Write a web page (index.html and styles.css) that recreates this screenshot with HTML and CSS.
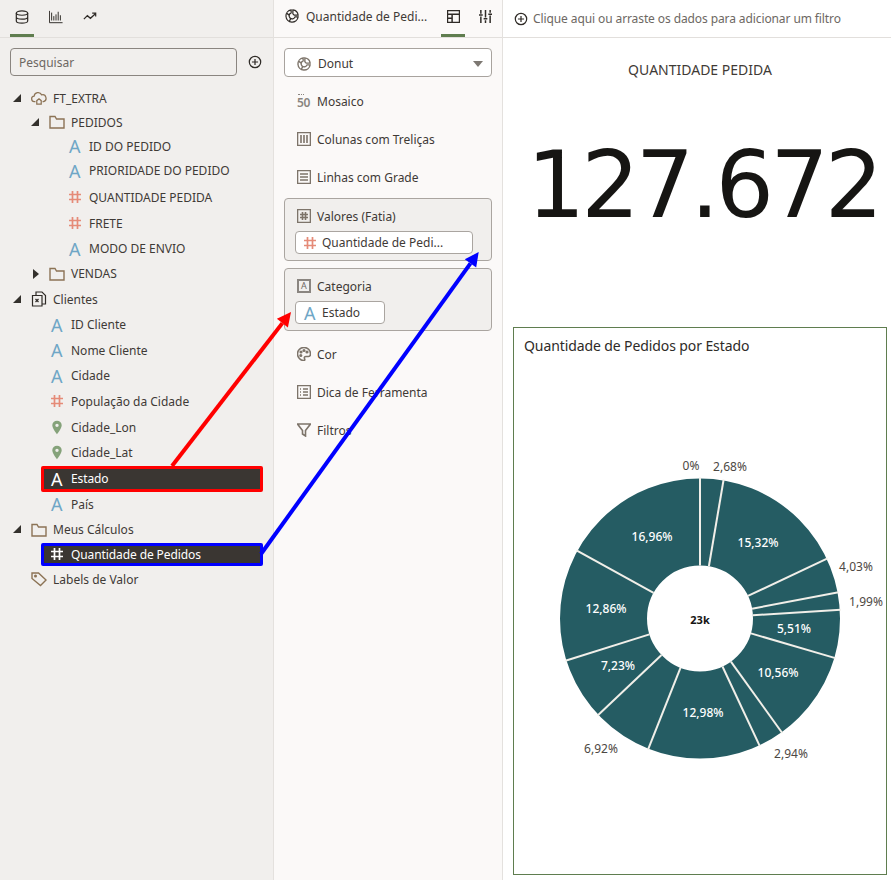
FILE: index.html
```html
<!DOCTYPE html>
<html>
<head>
    <title>Quantidade de Pedidos</title>
    <link rel="stylesheet" href="styles.css">
</head>
<body>
    <svg class="sprite" xmlns="http://www.w3.org/2000/svg">
        <symbol id="i-db" viewBox="0 0 16 16"><ellipse cx="8" cy="3.5" rx="6.5" ry="2.5"/><path d="M1.5 3.5v9c0 1.4 2.9 2.5 6.5 2.5s6.500-1.100 6.500-2.500v-9M1.500 8c0 1.400 2.900 2.500 6.500 2.500s6.500-1.100 6.500-2.500"/></symbol>
        <symbol id="i-bars" viewBox="0 0 16 16"><path d="M.5 1v13.500h15M3 12V3M5.500 12V7M8 12V5M10.500 12V2M13 12V6"/></symbol>
        <symbol id="i-trend" viewBox="0 0 16 16"><path d="M1 10.500l4-4 3.500 3 6-5.500M10.500 3.500h4v4"/></symbol>
        <symbol id="i-plus" viewBox="0 0 16 16"><circle cx="8" cy="8" r="6.500"/><path d="M8 4.500v7M4.500 8h7"/></symbol>
        <symbol id="i-cloud" viewBox="0 0 18 16"><path d="M5 12H4a3 3 0 0 1-.500-6 4.500 4.500 0 0 1 8.500-1.500 3.800 3.800 0 0 1 2 7.500h-1"/><path d="M6.500 15v-4l2.500-2 2.500 2v4z"/></symbol>
        <symbol id="i-folder" viewBox="0 0 16 16"><path d="M1 14V2.500h5l1.500 2.500h7.500v9z"/></symbol>
        <symbol id="i-docs" viewBox="0 0 16 16"><path d="M5 4V1h6l3.500 3.500V13H11"/><path d="M1.500 4.500H11V15H1.500z"/><path d="M4.500 8l3 3M7.500 8l-3 3"/></symbol>
        <symbol id="i-pin" viewBox="0 0 14 16"><path fill-rule="evenodd" d="M7 0a5.500 5.500 0 0 0-5.500 5.500C1.500 9.500 7 16 7 16s5.500-6.500 5.500-10.500A5.500 5.500 0 0 0 7 0zm0 3.500a2 2 0 1 1 0 4 2 2 0 0 1 0-4z"/></symbol>
        <symbol id="i-tag" viewBox="0 0 16 16"><path d="M1 2h6.500l7.500 7-5.500 5.500L1 7.500z"/><circle cx="4.500" cy="5" r=".8"/></symbol>
        <symbol id="i-hash" viewBox="0 0 12 12"><path d="M3.500 0v12M8.500 0v12M0 3.500h12M0 8.500h12"/></symbol>
        <symbol id="i-donut" viewBox="0 0 16 16"><path d="M7 1a7 7 0 1 0 8 8h-3.500A3.500 3.500 0 1 1 7 4.500z"/><path d="M9 1v4.500l1.500 1.500H15A7 7 0 0 0 9 1z"/><path d="M2 5l3 2M5 14l1.500-3"/></symbol>
        <symbol id="i-layout" viewBox="0 0 14 14"><path d="M.5.500h13v13H.500zM.5 4.500h13M5.500 4.500v9M.5 9h5"/></symbol>
        <symbol id="i-sliders" viewBox="0 0 14 14"><path d="M2 0v4M2 7v7M7 0v8M7 11v3M12 0v3M12 6v8M0 5.500h4M5 9.500h4M10 4.500h4"/></symbol>
        <symbol id="i-cols" viewBox="0 0 14 14"><path d="M.5.500h13v13H.500zM4 3v8M7 3v8M10 3v8"/></symbol>
        <symbol id="i-rows" viewBox="0 0 14 14"><path d="M.5.500h13v13H.500zM3 4h8M3 7h8M3 10h8"/></symbol>
        <symbol id="i-grid" viewBox="0 0 14 14"><path d="M.5.500h13v13H.500zM5.500 3v8M8.500 3v8M3 5.500h8M3 8.500h8"/></symbol>
        <symbol id="i-palette" viewBox="0 0 14 14"><path d="M7 .5C3 .5.500 3.500.500 7S3.500 13.500 6.500 13.500c1.500 0 1.500-1 1-2s0-2 1.500-2h2.500c1.500 0 2-1 2-2.500C13.500 3 10.500.500 7 .5z"/><circle cx="4" cy="5" r=".8"/><circle cx="7" cy="3.500" r=".8"/><circle cx="10" cy="5" r=".8"/><circle cx="3.800" cy="8.500" r=".8"/></symbol>
        <symbol id="i-list" viewBox="0 0 14 14"><path d="M.5.500h13v13H.500zM3 4h1M6 4h5M3 7h1M6 7h5M3 10h1M6 10h5"/></symbol>
        <symbol id="i-funnel" viewBox="0 0 14 14"><path d="M.5 1h13L8.500 7.500V13l-3-2V7.500z"/></symbol>
    </svg>

    <div class="page">
        <aside class="data-panel">
            <div class="tabs">
                <span class="tab active"><svg class="icon dark"><use href="#i-db"/></svg></span>
                <span class="tab"><svg class="icon dark thin"><use href="#i-bars"/></svg></span>
                <span class="tab"><svg class="icon dark"><use href="#i-trend"/></svg></span>
            </div>
            <div class="search-row">
                <div class="search">Pesquisar</div>
                <svg class="icon dark add"><use href="#i-plus"/></svg>
            </div>
            <div class="tree">
                <div class="row short lvl0"><span class="toggle open"></span><svg class="icon brown cloud"><use href="#i-cloud"/></svg>FT_EXTRA</div>
                <div class="row short lvl1"><span class="toggle open"></span><svg class="icon brown"><use href="#i-folder"/></svg>PEDIDOS</div>
                <div class="row short lvl2"><span class="toggle"></span><span class="attr">A</span>ID DO PEDIDO</div>
                <div class="row lvl2"><span class="toggle"></span><span class="attr">A</span>PRIORIDADE DO PEDIDO</div>
                <div class="row tall lvl2"><span class="toggle"></span><svg class="icon num"><use href="#i-hash"/></svg>QUANTIDADE PEDIDA</div>
                <div class="row lvl2"><span class="toggle"></span><svg class="icon num"><use href="#i-hash"/></svg>FRETE</div>
                <div class="row lvl2"><span class="toggle"></span><span class="attr">A</span>MODO DE ENVIO</div>
                <div class="row short lvl1"><span class="toggle closed"></span><svg class="icon brown"><use href="#i-folder"/></svg>VENDAS</div>
                <div class="row tall lvl0"><span class="toggle open"></span><svg class="icon dark docs"><use href="#i-docs"/></svg>Clientes</div>
                <div class="row short leaf"><span class="attr">A</span>ID Cliente</div>
                <div class="row tall leaf"><span class="attr">A</span>Nome Cliente</div>
                <div class="row short leaf"><span class="attr">A</span>Cidade</div>
                <div class="row tall leaf"><svg class="icon num"><use href="#i-hash"/></svg>População da Cidade</div>
                <div class="row leaf"><svg class="icon pin"><use href="#i-pin"/></svg>Cidade_Lon</div>
                <div class="row leaf"><svg class="icon pin"><use href="#i-pin"/></svg>Cidade_Lat</div>
                <div class="row selected red"><span class="attr">A</span>Estado</div>
                <div class="row leaf"><span class="attr">A</span>País</div>
                <div class="row lvl0"><span class="toggle open"></span><svg class="icon brown"><use href="#i-folder"/></svg>Meus Cálculos</div>
                <div class="row selected blue"><svg class="icon num"><use href="#i-hash"/></svg>Quantidade de Pedidos</div>
                <div class="row tall lvl0"><span class="toggle"></span><svg class="icon brown"><use href="#i-tag"/></svg>Labels de Valor</div>
            </div>
        </aside>

        <section class="grammar-panel">
            <div class="grammar-head">
                <svg class="icon dark chart-type"><use href="#i-donut"/></svg>
                <span class="grammar-title">Quantidade de Pedi...</span>
                <span class="tab small active"><svg class="icon dark"><use href="#i-layout"/></svg></span>
                <span class="tab small"><svg class="icon dark"><use href="#i-sliders"/></svg></span>
            </div>
            <div class="grammar-body">
                <div class="dropdown">
                    <svg class="icon grey"><use href="#i-donut"/></svg>
                    <span class="dropdown-label">Donut</span>
                    <span class="caret"></span>
                </div>
                <div class="items">
                    <div class="item"><span class="mosaic">50</span>Mosaico</div>
                    <div class="item"><svg class="icon grey"><use href="#i-cols"/></svg>Colunas com Treliças</div>
                    <div class="item"><svg class="icon grey"><use href="#i-rows"/></svg>Linhas com Grade</div>
                </div>
                <div class="drop-box">
                    <div class="drop-head"><svg class="icon grey"><use href="#i-grid"/></svg>Valores (Fatia)</div>
                    <div class="pill wide"><svg class="icon num"><use href="#i-hash"/></svg>Quantidade de Pedi...</div>
                </div>
                <div class="drop-box">
                    <div class="drop-head"><span class="boxed-a">A</span>Categoria</div>
                    <div class="pill"><span class="attr">A</span>Estado</div>
                </div>
                <div class="items after">
                    <div class="item"><svg class="icon grey"><use href="#i-palette"/></svg>Cor</div>
                    <div class="item"><svg class="icon grey"><use href="#i-list"/></svg>Dica de Ferramenta</div>
                    <div class="item"><svg class="icon grey"><use href="#i-funnel"/></svg>Filtros</div>
                </div>
            </div>
        </section>

        <main class="canvas">
            <div class="filter-bar">
                <svg class="icon dark"><use href="#i-plus"/></svg>
                Clique aqui ou arraste os dados para adicionar um filtro
            </div>
            <div class="kpi">
                <div class="kpi-title">QUANTIDADE PEDIDA</div>
                <div class="kpi-value">127.672</div>
            </div>
            <div class="chart-card">
                <div class="chart-title">Quantidade de Pedidos por Estado</div>
                <svg class="donut" viewBox="514 360 372 514" xmlns="http://www.w3.org/2000/svg">
                    <circle class="ring" cx="700" cy="618.500" r="96.500"/>
                    <g class="cuts" transform="translate(700 618.500)">
                        <line y1="-53" y2="-141"/>
                        <line y1="-53" y2="-141" transform="rotate(9.648)"/>
                        <line y1="-53" y2="-141" transform="rotate(64.8)"/>
                        <line y1="-53" y2="-141" transform="rotate(79.308)"/>
                        <line y1="-53" y2="-141" transform="rotate(86.472)"/>
                        <line y1="-53" y2="-141" transform="rotate(106.308)"/>
                        <line y1="-53" y2="-141" transform="rotate(144.324)"/>
                        <line y1="-53" y2="-141" transform="rotate(154.908)"/>
                        <line y1="-53" y2="-141" transform="rotate(201.636)"/>
                        <line y1="-53" y2="-141" transform="rotate(226.548)"/>
                        <line y1="-53" y2="-141" transform="rotate(252.576)"/>
                        <line y1="-53" y2="-141" transform="rotate(298.872)"/>
                    </g>
                    <g class="out">
                        <text x="691" y="470">0%</text>
                        <text x="730" y="471">2,68%</text>
                        <text x="856" y="571">4,03%</text>
                        <text x="866" y="606">1,99%</text>
                        <text x="791" y="758">2,94%</text>
                        <text x="601" y="753">6,92%</text>
                    </g>
                    <g class="in">
                        <text x="758" y="547">15,32%</text>
                        <text x="794" y="633">5,51%</text>
                        <text x="778" y="677">10,56%</text>
                        <text x="703" y="717">12,98%</text>
                        <text x="618" y="670">7,23%</text>
                        <text x="606" y="613">12,86%</text>
                        <text x="652" y="541">16,96%</text>
                    </g>
                    <text class="total" x="700" y="624">23k</text>
                </svg>
            </div>
        </main>
    </div>

    <svg class="arrows" viewBox="0 0 891 880" xmlns="http://www.w3.org/2000/svg">
        <line class="arrow-red" x1="172" y1="466" x2="282.400" y2="323.100"/>
        <polygon fill="#ff0000" points="291,312 287.900,327.400 276.900,318.800"/>
        <line class="arrow-blue" x1="261" y1="554" x2="470.500" y2="263.400"/>
        <polygon fill="#0000ff" points="478.700,252 476.200,267.500 464.800,259.300"/>
    </svg>
</body>
</html>
```

FILE: styles.css
```css
* {
    box-sizing: border-box;
}

body {
    margin: 0;
    height: 880px;
    overflow: hidden;
    position: relative;
    font-family: "Noto Sans", sans-serif;
    font-size: 12px;
    color: #3f3a36;
    background-color: #fff;
}

.sprite {
    display: none;
}

.page {
    display: flex;
    height: 880px;
}

.icon {
    width: 14px;
    height: 14px;
    flex: none;
    fill: none;
    stroke-width: 1.4;
    overflow: visible;
}

.dark {
    stroke: #2f2b27;
}

.thin {
    stroke-width: 1.1;
}

.brown {
    stroke: #8c7355;
    width: 16px;
    height: 16px;
}

.docs {
    width: 16px;
    height: 16px;
    stroke-width: 1.2;
}

.grey {
    stroke: #7d746a;
    stroke-width: 1.6;
}

.pin {
    width: 12px;
    height: 15px;
    fill: #85a27a;
    stroke: none;
}

/* left panel */
.data-panel {
    width: 274px;
    flex: none;
    background-color: #f1efed;
    border-right: 1px solid #e4e1de;
}

.tabs {
    display: flex;
    height: 38px;
    padding-left: 10px;
    border-bottom: 1px solid #e2dfdc;
    gap: 10px;
}

.tab {
    width: 24px;
    height: 37px;
    flex: none;
    display: flex;
    justify-content: center;
    padding-top: 10px;
    border-bottom: 3px solid transparent;
}

.tab.active {
    border-bottom-color: #5f7d4f;
}

.search-row {
    display: flex;
    align-items: center;
    padding: 10px 0 0 10px;
    gap: 11px;
}

.search {
    width: 227px;
    height: 28px;
    border: 1px solid #8a8580;
    border-radius: 4px;
    padding: 1px 8px 0;
    line-height: 26px;
    color: #6d6863;
}

.tree {
    margin-top: 10px;
}

.row {
    display: flex;
    align-items: center;
    height: 25.5px;
}

.row.short {
    height: 24px;
}

.row.tall {
    height: 27px;
}

.lvl0 {
    padding-left: 13px;
}

.lvl1 {
    padding-left: 31px;
}

.lvl2 {
    padding-left: 49px;
}

.leaf {
    padding-left: 49px;
}

.lvl0 > .icon,
.lvl1 > .icon {
    margin-right: 6px;
}

.toggle {
    width: 18px;
    height: 9px;
    flex: none;
}

.toggle.open::before {
    content: "";
    display: block;
    width: 0;
    height: 0;
    border-left: 8px solid transparent;
    border-bottom: 8px solid #33302c;
}

.toggle.closed::before {
    content: "";
    display: block;
    width: 0;
    height: 0;
    margin-left: 2px;
    border-top: 5px solid transparent;
    border-bottom: 5px solid transparent;
    border-left: 6px solid #33302c;
}

.attr {
    width: 22px;
    flex: none;
    padding-left: 2px;
    font-size: 18px;
    line-height: 20px;
    color: #6fa6c6;
}

.icon.num {
    width: 12px;
    height: 12px;
    margin: 0 8px 0 2px;
    stroke: #e58b78;
    stroke-width: 1.7;
}

.leaf > .icon.pin {
    margin: 0 8px 0 2px;
}

.selected {
    margin-left: 41px;
    width: 222px;
    padding-left: 5px;
    background-color: #3a3632;
    color: #fff;
    letter-spacing: -0.1px;
    border: 3px solid;
    border-radius: 2px;
}

.selected .attr {
    color: #fff;
}

.selected .icon.num {
    stroke: #fff;
}

.selected.red {
    height: 26px;
    border-color: #ff0000;
}

.selected.blue {
    height: 23px;
    border-color: #0000ff;
}

/* middle panel */
.grammar-panel {
    width: 229px;
    flex: none;
    background-color: #fbf9f8;
    border-right: 1px solid #e4e1de;
}

.grammar-head {
    display: flex;
    height: 38px;
    padding-left: 11px;
    border-bottom: 1px solid #e2dfdc;
    align-items: flex-start;
}

.chart-type {
    margin-top: 9px;
}

.grammar-title {
    flex: none;
    margin: 8px 14px 0 7px;
    width: 121px;
    white-space: nowrap;
}

.tab.small {
    margin-right: 8px;
}

.tab.small:last-child {
    margin-right: 0;
}

.tab.small .icon {
    width: 13px;
    height: 13px;
    stroke-width: 1.6;
}

.grammar-body {
    padding: 10px 10px 0;
}

.dropdown {
    display: flex;
    align-items: center;
    height: 29px;
    background-color: #fff;
    border: 1px solid #a8a39e;
    border-radius: 4px;
    padding: 2px 8px 0 12px;
}

.dropdown-label {
    margin-left: 7px;
    flex: 1;
}

.caret {
    width: 0;
    height: 0;
    border-left: 5px solid transparent;
    border-right: 5px solid transparent;
    border-top: 6px solid #7d7872;
}

.items {
    margin: 5px 0 2px;
}

.items.after {
    margin: 4px 0 0;
}

.item {
    display: flex;
    align-items: center;
    height: 38px;
    padding-left: 13px;
}

.item .icon {
    margin-right: 6px;
}

.mosaic {
    width: 20px;
    flex: none;
    display: flex;
    flex-direction: column;
    font-size: 12px;
    line-height: 10px;
    font-weight: 600;
    color: #8a8580;
    letter-spacing: -0.3px;
}

.mosaic::before {
    content: "";
    width: 6px;
    height: 3px;
    margin-left: 1px;
    border-top: 1px dotted #8a8580;
}

.drop-box {
    background-color: #f1efed;
    border: 1px solid #aaa5a0;
    border-radius: 4px;
    padding: 7px 10px 6px;
}

.drop-box + .drop-box {
    margin-top: 7px;
}

.drop-head {
    display: flex;
    align-items: center;
    height: 20px;
    padding-left: 2px;
}

.drop-head .icon {
    margin-right: 6px;
}

.boxed-a {
    width: 14px;
    height: 14px;
    margin-right: 6px;
    border: 2px solid #8a8580;
    font-size: 9px;
    line-height: 10px;
    text-align: center;
    color: #6d6863;
}

.pill {
    display: flex;
    align-items: center;
    width: 90px;
    height: 23px;
    margin-top: 5px;
    background-color: #fff;
    border: 1px solid #aaa5a0;
    border-radius: 4px;
    padding-left: 6px;
    white-space: nowrap;
}

.pill.wide {
    width: 178px;
}

.pill .attr {
    width: 20px;
    padding-left: 2px;
}

.pill .icon.num {
    margin: 0 6px 0 2px;
}

/* canvas */
.canvas {
    flex: 1;
    min-width: 0;
}

.filter-bar {
    display: flex;
    align-items: center;
    gap: 5px;
    height: 38px;
    padding-left: 11px;
    border-bottom: 1px solid #e2dfdc;
    color: #6d6863;
    letter-spacing: -0.1px;
}

.kpi {
    height: 289px;
    text-align: center;
}

.kpi-title {
    padding: 22px 0 0 6px;
    line-height: 20px;
    font-size: 14px;
    color: #3f3a36;
}

.kpi-value {
    margin-top: 59px;
    padding-left: 12px;
    font-family: "DejaVu Sans", sans-serif;
    font-size: 92px;
    letter-spacing: -4px;
    line-height: 94px;
    color: #161513;
}

.chart-card {
    width: 374px;
    height: 548px;
    margin-left: 10px;
    border: 1px solid #5f7d4f;
    background-color: #fff;
}

.chart-title {
    height: 32px;
    padding: 8px 10px 0;
    font-size: 14px;
    line-height: 20px;
    letter-spacing: -0.1px;
    color: #2e2b28;
}

.donut {
    display: block;
    width: 372px;
    height: 514px;
}

.ring {
    fill: none;
    stroke: #255c63;
    stroke-width: 87;
}

.cuts line {
    stroke: #f1efe9;
    stroke-width: 2;
}

.donut text {
    font-family: "Noto Sans", sans-serif;
    font-size: 12px;
    text-anchor: middle;
}

.out text {
    fill: #4d4843;
}

.in text {
    fill: #fff;
    font-weight: 500;
}

.donut .total {
    font-size: 11px;
    font-weight: 700;
    fill: #161513;
}

/* annotations over the screenshot */
.arrows {
    position: absolute;
    left: 0;
    top: 0;
    width: 891px;
    height: 880px;
    pointer-events: none;
}

.arrow-red {
    stroke: #ff0000;
    stroke-width: 4;
}

.arrow-blue {
    stroke: #0000ff;
    stroke-width: 4;
}
```
